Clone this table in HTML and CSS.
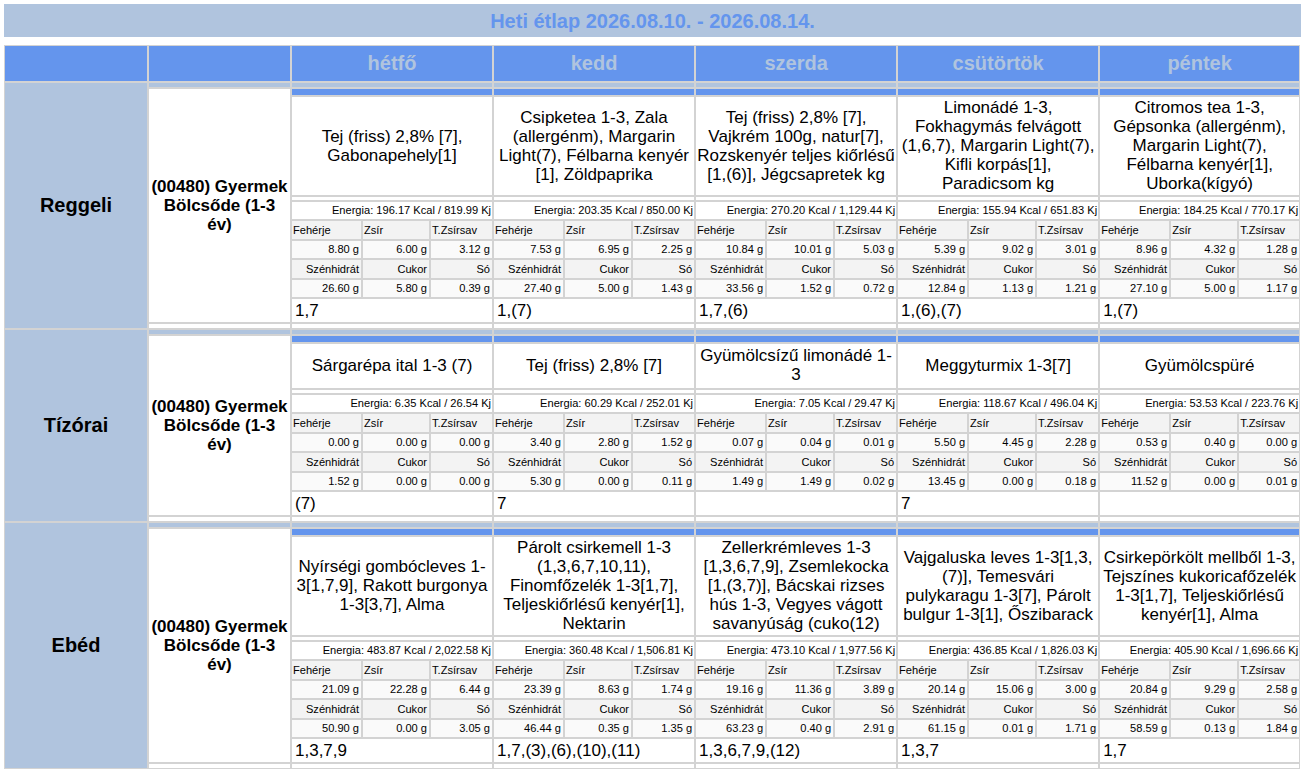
FILE: index.html
```html
<!DOCTYPE html>
<html lang="hu">
<head>
<meta charset="utf-8">
<title>Heti étlap</title>
<link rel="stylesheet" href="styles.css">
</head>
<body>
<div class="title">Heti étlap 2026.08.10. - 2026.08.14.</div>
<table class="menu">
  <colgroup>
    <col class="c-meal"><col class="c-loc">
    <col class="c-a"><col class="c-b"><col class="c-c">
    <col class="c-a"><col class="c-b"><col class="c-c">
    <col class="c-a"><col class="c-b"><col class="c-c">
    <col class="c-a"><col class="c-b"><col class="c-c">
    <col class="c-a"><col class="c-b"><col class="c-c2">
  </colgroup>
  <thead>
    <tr class="hrow">
      <th class="dayh"></th><th class="dayh"></th>
      <th class="dayh" colspan="3">hétfő</th>
      <th class="dayh" colspan="3">kedd</th>
      <th class="dayh" colspan="3">szerda</th>
      <th class="dayh" colspan="3">csütörtök</th>
      <th class="dayh" colspan="3">péntek</th>
    </tr>
  </thead>
  <tbody>
    <!-- Reggeli -->
    <tr>
      <td class="meal" rowspan="11">Reggeli</td>
      <td class="band"><div></div></td>
      <td class="band" colspan="3"><div></div></td>
      <td class="band" colspan="3"><div></div></td>
      <td class="band" colspan="3"><div></div></td>
      <td class="band" colspan="3"><div></div></td>
      <td class="band" colspan="3"><div></div></td>
    </tr>
    <tr>
      <td class="loc" rowspan="9">(00480) Gyermek Bölcsőde (1-3 év)</td>
      <td class="strip" colspan="3"><div></div></td>
      <td class="strip" colspan="3"><div></div></td>
      <td class="strip" colspan="3"><div></div></td>
      <td class="strip" colspan="3"><div></div></td>
      <td class="strip" colspan="3"><div></div></td>
    </tr>
    <tr>
      <td class="food" colspan="3">Tej (friss) 2,8% [7], Gabonapehely[1]</td>
      <td class="food" colspan="3">Csipketea 1-3, Zala (allergénm), Margarin Light(7), Félbarna kenyér [1], Zöldpaprika</td>
      <td class="food" colspan="3">Tej (friss) 2,8% [7], Vajkrém 100g, natur[7], Rozskenyér teljes kiőrlésű [1,(6)], Jégcsapretek kg</td>
      <td class="food" colspan="3">Limonádé 1-3, Fokhagymás felvágott (1,6,7), Margarin Light(7), Kifli korpás[1], Paradicsom kg</td>
      <td class="food" colspan="3">Citromos tea 1-3, Gépsonka (allergénm), Margarin Light(7), Félbarna kenyér[1], Uborka(kígyó)</td>
    </tr>
    <tr>
      <td class="sp" colspan="3"><div></div></td>
      <td class="sp" colspan="3"><div></div></td>
      <td class="sp" colspan="3"><div></div></td>
      <td class="sp" colspan="3"><div></div></td>
      <td class="sp" colspan="3"><div></div></td>
    </tr>
    <tr>
      <td class="en" colspan="3">Energia: 196.17 Kcal / 819.99 Kj</td>
      <td class="en" colspan="3">Energia: 203.35 Kcal / 850.00 Kj</td>
      <td class="en" colspan="3">Energia: 270.20 Kcal / 1,129.44 Kj</td>
      <td class="en" colspan="3">Energia: 155.94 Kcal / 651.83 Kj</td>
      <td class="en" colspan="3">Energia: 184.25 Kcal / 770.17 Kj</td>
    </tr>
    <tr>
      <td class="lb">Fehérje</td><td class="lb">Zsír</td><td class="lb">T.Zsírsav</td>
      <td class="lb">Fehérje</td><td class="lb">Zsír</td><td class="lb">T.Zsírsav</td>
      <td class="lb">Fehérje</td><td class="lb">Zsír</td><td class="lb">T.Zsírsav</td>
      <td class="lb">Fehérje</td><td class="lb">Zsír</td><td class="lb">T.Zsírsav</td>
      <td class="lb">Fehérje</td><td class="lb">Zsír</td><td class="lb">T.Zsírsav</td>
    </tr>
    <tr>
      <td class="v">8.80 g</td><td class="v">6.00 g</td><td class="v">3.12 g</td>
      <td class="v">7.53 g</td><td class="v">6.95 g</td><td class="v">2.25 g</td>
      <td class="v">10.84 g</td><td class="v">10.01 g</td><td class="v">5.03 g</td>
      <td class="v">5.39 g</td><td class="v">9.02 g</td><td class="v">3.01 g</td>
      <td class="v">8.96 g</td><td class="v">4.32 g</td><td class="v">1.28 g</td>
    </tr>
    <tr>
      <td class="lb r">Szénhidrát</td><td class="lb r">Cukor</td><td class="lb r">Só</td>
      <td class="lb r">Szénhidrát</td><td class="lb r">Cukor</td><td class="lb r">Só</td>
      <td class="lb r">Szénhidrát</td><td class="lb r">Cukor</td><td class="lb r">Só</td>
      <td class="lb r">Szénhidrát</td><td class="lb r">Cukor</td><td class="lb r">Só</td>
      <td class="lb r">Szénhidrát</td><td class="lb r">Cukor</td><td class="lb r">Só</td>
    </tr>
    <tr>
      <td class="v">26.60 g</td><td class="v">5.80 g</td><td class="v">0.39 g</td>
      <td class="v">27.40 g</td><td class="v">5.00 g</td><td class="v">1.43 g</td>
      <td class="v">33.56 g</td><td class="v">1.52 g</td><td class="v">0.72 g</td>
      <td class="v">12.84 g</td><td class="v">1.13 g</td><td class="v">1.21 g</td>
      <td class="v">27.10 g</td><td class="v">5.00 g</td><td class="v">1.17 g</td>
    </tr>
    <tr>
      <td class="al" colspan="3">1,7</td>
      <td class="al" colspan="3">1,(7)</td>
      <td class="al" colspan="3">1,7,(6)</td>
      <td class="al" colspan="3">1,(6),(7)</td>
      <td class="al" colspan="3">1,(7)</td>
    </tr>
    <tr>
      <td class="gap"><div></div></td>
      <td class="gap" colspan="3"><div></div></td>
      <td class="gap" colspan="3"><div></div></td>
      <td class="gap" colspan="3"><div></div></td>
      <td class="gap" colspan="3"><div></div></td>
      <td class="gap" colspan="3"><div></div></td>
    </tr>

    <!-- Tízórai -->
    <tr>
      <td class="meal" rowspan="11">Tízórai</td>
      <td class="band"><div></div></td>
      <td class="band" colspan="3"><div></div></td>
      <td class="band" colspan="3"><div></div></td>
      <td class="band" colspan="3"><div></div></td>
      <td class="band" colspan="3"><div></div></td>
      <td class="band" colspan="3"><div></div></td>
    </tr>
    <tr>
      <td class="loc" rowspan="9">(00480) Gyermek Bölcsőde (1-3 év)</td>
      <td class="strip" colspan="3"><div></div></td>
      <td class="strip" colspan="3"><div></div></td>
      <td class="strip" colspan="3"><div></div></td>
      <td class="strip" colspan="3"><div></div></td>
      <td class="strip" colspan="3"><div></div></td>
    </tr>
    <tr class="short">
      <td class="food" colspan="3">Sárgarépa ital 1-3 (7)</td>
      <td class="food" colspan="3">Tej (friss) 2,8% [7]</td>
      <td class="food" colspan="3">Gyümölcsízű limonádé 1-3</td>
      <td class="food" colspan="3">Meggyturmix 1-3[7]</td>
      <td class="food" colspan="3">Gyümölcspüré</td>
    </tr>
    <tr>
      <td class="sp" colspan="3"><div></div></td>
      <td class="sp" colspan="3"><div></div></td>
      <td class="sp" colspan="3"><div></div></td>
      <td class="sp" colspan="3"><div></div></td>
      <td class="sp" colspan="3"><div></div></td>
    </tr>
    <tr>
      <td class="en" colspan="3">Energia: 6.35 Kcal / 26.54 Kj</td>
      <td class="en" colspan="3">Energia: 60.29 Kcal / 252.01 Kj</td>
      <td class="en" colspan="3">Energia: 7.05 Kcal / 29.47 Kj</td>
      <td class="en" colspan="3">Energia: 118.67 Kcal / 496.04 Kj</td>
      <td class="en" colspan="3">Energia: 53.53 Kcal / 223.76 Kj</td>
    </tr>
    <tr>
      <td class="lb">Fehérje</td><td class="lb">Zsír</td><td class="lb">T.Zsírsav</td>
      <td class="lb">Fehérje</td><td class="lb">Zsír</td><td class="lb">T.Zsírsav</td>
      <td class="lb">Fehérje</td><td class="lb">Zsír</td><td class="lb">T.Zsírsav</td>
      <td class="lb">Fehérje</td><td class="lb">Zsír</td><td class="lb">T.Zsírsav</td>
      <td class="lb">Fehérje</td><td class="lb">Zsír</td><td class="lb">T.Zsírsav</td>
    </tr>
    <tr>
      <td class="v">0.00 g</td><td class="v">0.00 g</td><td class="v">0.00 g</td>
      <td class="v">3.40 g</td><td class="v">2.80 g</td><td class="v">1.52 g</td>
      <td class="v">0.07 g</td><td class="v">0.04 g</td><td class="v">0.01 g</td>
      <td class="v">5.50 g</td><td class="v">4.45 g</td><td class="v">2.28 g</td>
      <td class="v">0.53 g</td><td class="v">0.40 g</td><td class="v">0.00 g</td>
    </tr>
    <tr>
      <td class="lb r">Szénhidrát</td><td class="lb r">Cukor</td><td class="lb r">Só</td>
      <td class="lb r">Szénhidrát</td><td class="lb r">Cukor</td><td class="lb r">Só</td>
      <td class="lb r">Szénhidrát</td><td class="lb r">Cukor</td><td class="lb r">Só</td>
      <td class="lb r">Szénhidrát</td><td class="lb r">Cukor</td><td class="lb r">Só</td>
      <td class="lb r">Szénhidrát</td><td class="lb r">Cukor</td><td class="lb r">Só</td>
    </tr>
    <tr>
      <td class="v">1.52 g</td><td class="v">0.00 g</td><td class="v">0.00 g</td>
      <td class="v">5.30 g</td><td class="v">0.00 g</td><td class="v">0.11 g</td>
      <td class="v">1.49 g</td><td class="v">1.49 g</td><td class="v">0.02 g</td>
      <td class="v">13.45 g</td><td class="v">0.00 g</td><td class="v">0.18 g</td>
      <td class="v">11.52 g</td><td class="v">0.00 g</td><td class="v">0.01 g</td>
    </tr>
    <tr>
      <td class="al" colspan="3">(7)</td>
      <td class="al" colspan="3">7</td>
      <td class="al" colspan="3"></td>
      <td class="al" colspan="3">7</td>
      <td class="al" colspan="3"></td>
    </tr>
    <tr>
      <td class="gap"><div></div></td>
      <td class="gap" colspan="3"><div></div></td>
      <td class="gap" colspan="3"><div></div></td>
      <td class="gap" colspan="3"><div></div></td>
      <td class="gap" colspan="3"><div></div></td>
      <td class="gap" colspan="3"><div></div></td>
    </tr>

    <!-- Ebéd -->
    <tr>
      <td class="meal" rowspan="11">Ebéd</td>
      <td class="band"><div></div></td>
      <td class="band" colspan="3"><div></div></td>
      <td class="band" colspan="3"><div></div></td>
      <td class="band" colspan="3"><div></div></td>
      <td class="band" colspan="3"><div></div></td>
      <td class="band" colspan="3"><div></div></td>
    </tr>
    <tr>
      <td class="loc" rowspan="9">(00480) Gyermek Bölcsőde (1-3 év)</td>
      <td class="strip" colspan="3"><div></div></td>
      <td class="strip" colspan="3"><div></div></td>
      <td class="strip" colspan="3"><div></div></td>
      <td class="strip" colspan="3"><div></div></td>
      <td class="strip" colspan="3"><div></div></td>
    </tr>
    <tr>
      <td class="food" colspan="3">Nyírségi gombócleves 1-3[1,7,9], Rakott burgonya 1-3[3,7], Alma</td>
      <td class="food" colspan="3">Párolt csirkemell 1-3 (1,3,6,7,10,11), Finomfőzelék 1-3[1,7], Teljeskiőrlésű kenyér[1], Nektarin</td>
      <td class="food" colspan="3">Zellerkrémleves 1-3 [1,3,6,7,9], Zsemlekocka [1,(3,7)], Bácskai rizses hús 1-3, Vegyes vágott savanyúság (cuko(12)</td>
      <td class="food" colspan="3">Vajgaluska leves 1-3[1,3,(7)], Temesvári pulykaragu 1-3[7], Párolt bulgur 1-3[1], Őszibarack</td>
      <td class="food" colspan="3">Csirkepörkölt mellből 1-3, Tejszínes kukoricafőzelék 1-3[1,7], Teljeskiőrlésű kenyér[1], Alma</td>
    </tr>
    <tr>
      <td class="sp" colspan="3"><div></div></td>
      <td class="sp" colspan="3"><div></div></td>
      <td class="sp" colspan="3"><div></div></td>
      <td class="sp" colspan="3"><div></div></td>
      <td class="sp" colspan="3"><div></div></td>
    </tr>
    <tr>
      <td class="en" colspan="3">Energia: 483.87 Kcal / 2,022.58 Kj</td>
      <td class="en" colspan="3">Energia: 360.48 Kcal / 1,506.81 Kj</td>
      <td class="en" colspan="3">Energia: 473.10 Kcal / 1,977.56 Kj</td>
      <td class="en" colspan="3">Energia: 436.85 Kcal / 1,826.03 Kj</td>
      <td class="en" colspan="3">Energia: 405.90 Kcal / 1,696.66 Kj</td>
    </tr>
    <tr>
      <td class="lb">Fehérje</td><td class="lb">Zsír</td><td class="lb">T.Zsírsav</td>
      <td class="lb">Fehérje</td><td class="lb">Zsír</td><td class="lb">T.Zsírsav</td>
      <td class="lb">Fehérje</td><td class="lb">Zsír</td><td class="lb">T.Zsírsav</td>
      <td class="lb">Fehérje</td><td class="lb">Zsír</td><td class="lb">T.Zsírsav</td>
      <td class="lb">Fehérje</td><td class="lb">Zsír</td><td class="lb">T.Zsírsav</td>
    </tr>
    <tr>
      <td class="v">21.09 g</td><td class="v">22.28 g</td><td class="v">6.44 g</td>
      <td class="v">23.39 g</td><td class="v">8.63 g</td><td class="v">1.74 g</td>
      <td class="v">19.16 g</td><td class="v">11.36 g</td><td class="v">3.89 g</td>
      <td class="v">20.14 g</td><td class="v">15.06 g</td><td class="v">3.00 g</td>
      <td class="v">20.84 g</td><td class="v">9.29 g</td><td class="v">2.58 g</td>
    </tr>
    <tr>
      <td class="lb r">Szénhidrát</td><td class="lb r">Cukor</td><td class="lb r">Só</td>
      <td class="lb r">Szénhidrát</td><td class="lb r">Cukor</td><td class="lb r">Só</td>
      <td class="lb r">Szénhidrát</td><td class="lb r">Cukor</td><td class="lb r">Só</td>
      <td class="lb r">Szénhidrát</td><td class="lb r">Cukor</td><td class="lb r">Só</td>
      <td class="lb r">Szénhidrát</td><td class="lb r">Cukor</td><td class="lb r">Só</td>
    </tr>
    <tr>
      <td class="v">50.90 g</td><td class="v">0.00 g</td><td class="v">3.05 g</td>
      <td class="v">46.44 g</td><td class="v">0.35 g</td><td class="v">1.35 g</td>
      <td class="v">63.23 g</td><td class="v">0.40 g</td><td class="v">2.91 g</td>
      <td class="v">61.15 g</td><td class="v">0.01 g</td><td class="v">1.71 g</td>
      <td class="v">58.59 g</td><td class="v">0.13 g</td><td class="v">1.84 g</td>
    </tr>
    <tr>
      <td class="al" colspan="3">1,3,7,9</td>
      <td class="al" colspan="3">1,7,(3),(6),(10),(11)</td>
      <td class="al" colspan="3">1,3,6,7,9,(12)</td>
      <td class="al" colspan="3">1,3,7</td>
      <td class="al" colspan="3">1,7</td>
    </tr>
    <tr>
      <td class="gap"><div></div></td>
      <td class="gap" colspan="3"><div></div></td>
      <td class="gap" colspan="3"><div></div></td>
      <td class="gap" colspan="3"><div></div></td>
      <td class="gap" colspan="3"><div></div></td>
      <td class="gap" colspan="3"><div></div></td>
    </tr>
  </tbody>
</table>
</body>
</html>
```

FILE: styles.css
```css
body {
  margin: 4px;
  font-family: "Liberation Sans", Arial, sans-serif;
  color: #000;
  background: #fff;
}

.title {
  width: 1297px;
  height: 33px;
  line-height: 34px;
  margin-bottom: 8px;
  background: #b0c4de;
  color: #6495ed;
  font-size: 20px;
  font-weight: bold;
  text-align: center;
}

.menu {
  width: 1296px;
  table-layout: fixed;
  border-collapse: separate;
  border-spacing: 0;
}

.c-meal { width: 144px; }
.c-loc { width: 143px; }
.c-a { width: 71px; }
.c-b { width: 68px; }
.c-c { width: 63px; }
.c-c2 { width: 62px; }

th,
td {
  border: 1px solid #d3d3d3;
  padding: 0;
}

.dayh {
  background: #6495ed;
  color: #b0c4de;
  font-size: 20px;
  font-weight: bold;
  line-height: 35px;
  text-align: center;
}

.meal {
  background: #b0c4de;
  font-size: 20px;
  font-weight: bold;
  text-align: center;
  vertical-align: middle;
}

.loc {
  background: #fff;
  font-size: 17px;
  font-weight: bold;
  line-height: 19px;
  text-align: center;
  vertical-align: middle;
  padding: 0 1px;
}

.band { background: #b0c4de; }
.band div { height: 4px; }

.strip { background: #6495ed; }
.strip div { height: 6px; }

.sp div { height: 3px; }
.gap div { height: 4px; }

.food {
  font-size: 17px;
  line-height: 19px;
  text-align: center;
  vertical-align: middle;
  padding: 1px 1px 2px;
}

.short .food { padding: 2px 1px 4px; }

.en,
.lb,
.v {
  font-size: 11.1px;
  white-space: nowrap;
  overflow: hidden;
}

.en {
  line-height: 17px;
  text-align: right;
  padding: 0 1px;
}

.lb {
  background: #f3f3f3;
  line-height: 18px;
  text-align: left;
  padding: 0 2px 0 1px;
}

.lb.r { text-align: right; }

.v {
  background: #fafafa;
  line-height: 17px;
  text-align: right;
  padding: 0 2px 0 1px;
}

.al {
  font-size: 17px;
  line-height: 22px;
  padding: 1px 2px 0 3px;
  text-align: left;
}
```
